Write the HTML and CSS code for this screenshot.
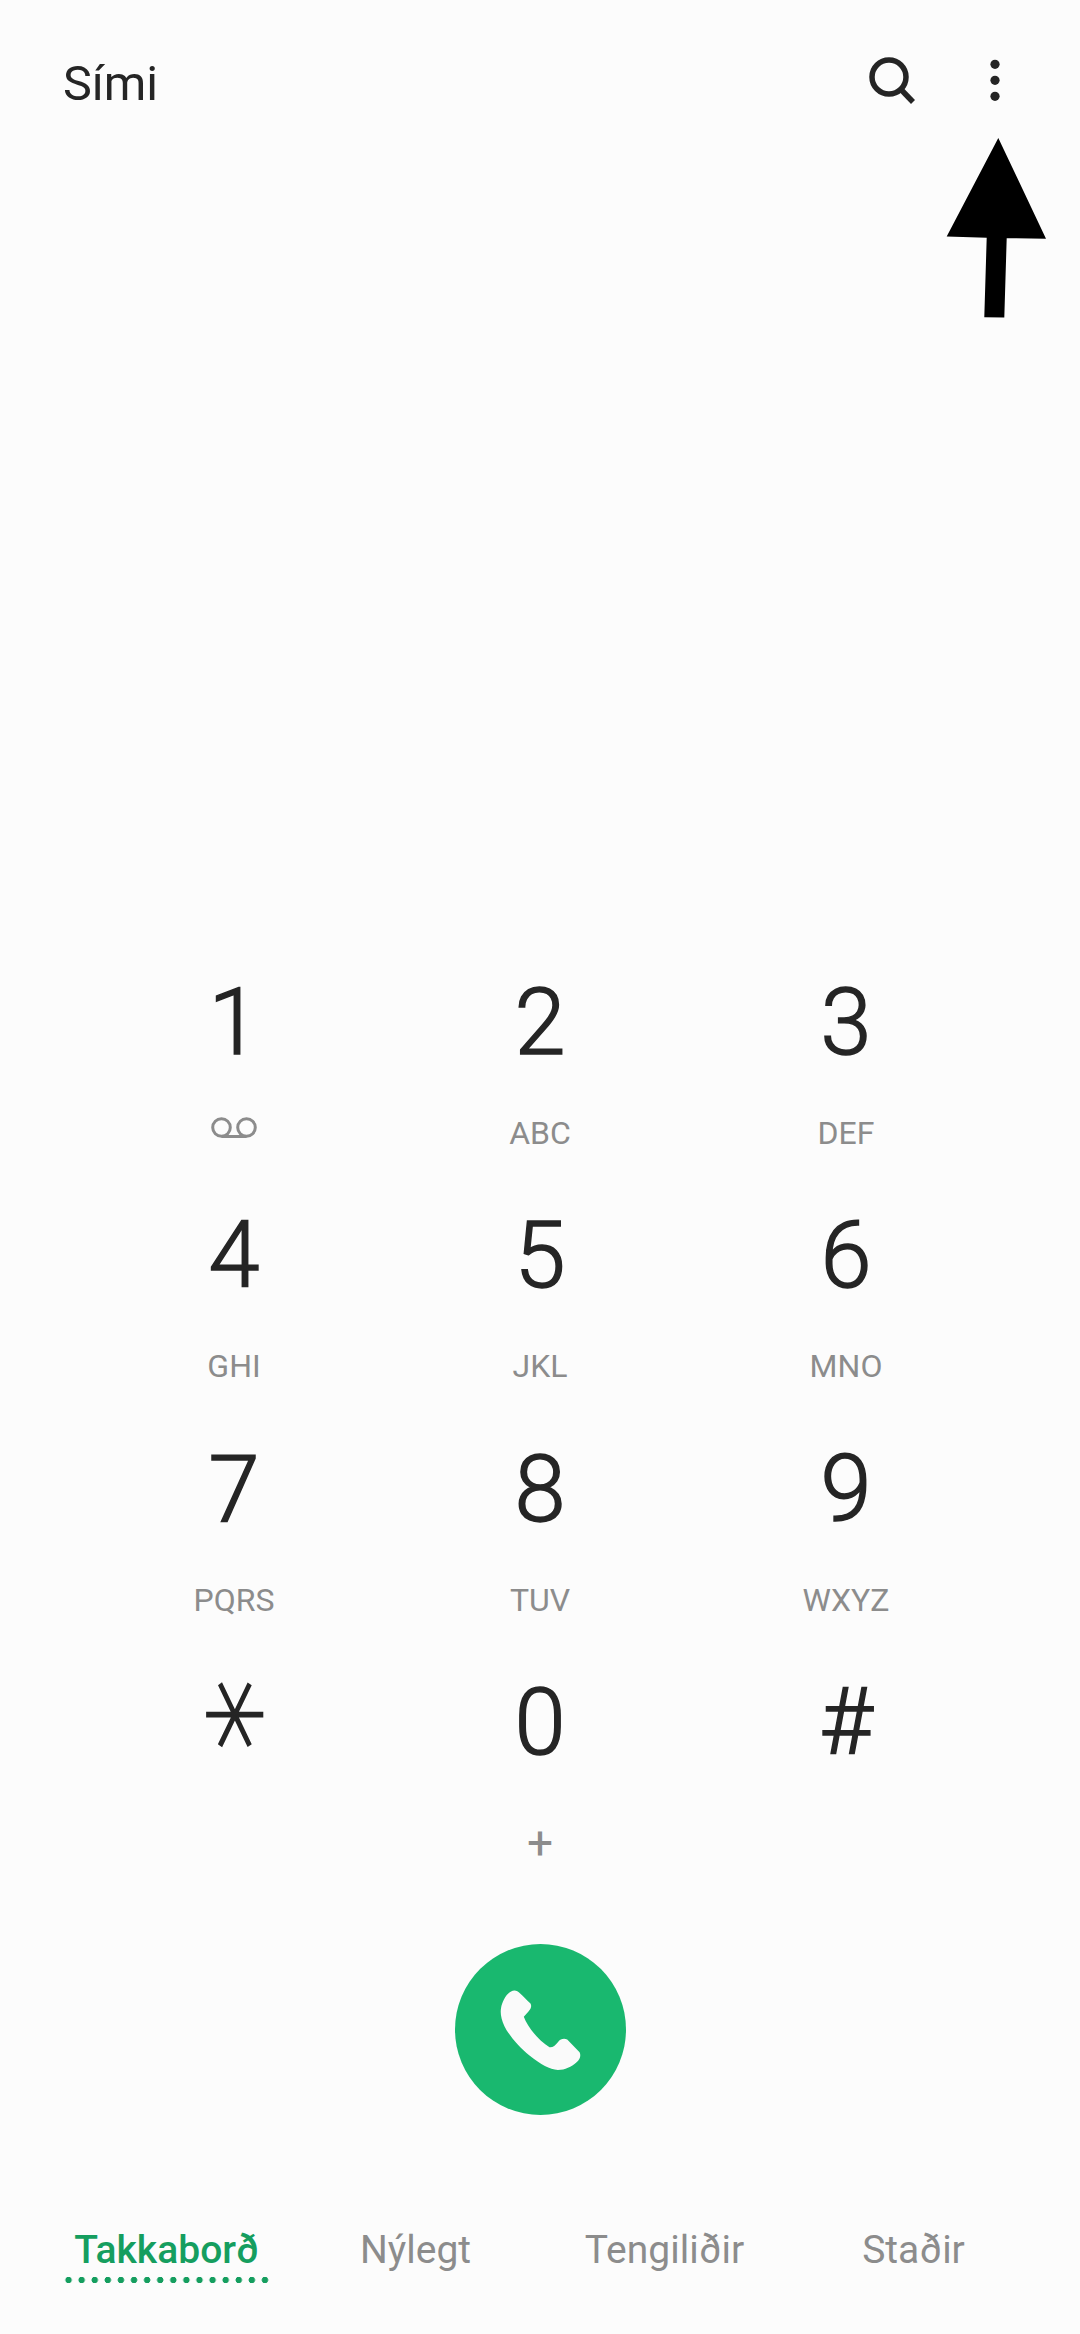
FILE: index.html
```html
<!DOCTYPE html>
<html lang="is">
<head>
    <meta charset="UTF-8">
    <meta name="viewport" content="width=device-width, initial-scale=1.0">
    <title>Sími</title>
    <link rel="stylesheet" href="styles.css">
</head>
<body>
    <header class="top-bar">
        <h1 class="app-title">Sími</h1>
        <div class="actions">
            <svg class="action-icon" viewBox="0 0 60 60" aria-label="Leita">
                <circle cx="29" cy="27" r="17" fill="none" stroke="#252525" stroke-width="5.5"/>
                <line x1="41" y1="39.5" x2="53" y2="52" stroke="#252525" stroke-width="5.5"/>
            </svg>
            <svg class="action-icon" viewBox="0 0 60 60" aria-label="Meira">
                <circle cx="30" cy="14.3" r="4.6" fill="#252525"/>
                <circle cx="30" cy="30.3" r="4.6" fill="#252525"/>
                <circle cx="30" cy="46.3" r="4.6" fill="#252525"/>
            </svg>
        </div>
    </header>

    <!-- black arrow pasted over the screenshot -->
    <svg class="arrow" viewBox="0 0 102 182">
        <polygon points="52.3,0 100,100.7 60.7,100.2 58.3,179.5 38.3,179.3 40.7,99.7 0.7,98.4"/>
    </svg>

    <main class="dialpad">
        <button class="key">
            <span class="digit">1</span>
            <svg class="voicemail" viewBox="0 0 46 21">
                <circle cx="10.5" cy="10.5" r="8.8" fill="none" stroke="#8c8c8c" stroke-width="3"/>
                <circle cx="35.5" cy="10.5" r="8.8" fill="none" stroke="#8c8c8c" stroke-width="3"/>
                <line x1="10.5" y1="19.5" x2="35.5" y2="19.5" stroke="#8c8c8c" stroke-width="3"/>
            </svg>
        </button>
        <button class="key"><span class="digit">2</span><span class="letters">ABC</span></button>
        <button class="key"><span class="digit">3</span><span class="letters">DEF</span></button>
        <button class="key"><span class="digit">4</span><span class="letters">GHI</span></button>
        <button class="key"><span class="digit">5</span><span class="letters">JKL</span></button>
        <button class="key"><span class="digit">6</span><span class="letters">MNO</span></button>
        <button class="key"><span class="digit">7</span><span class="letters">PQRS</span></button>
        <button class="key"><span class="digit">8</span><span class="letters">TUV</span></button>
        <button class="key"><span class="digit">9</span><span class="letters">WXYZ</span></button>
        <button class="key"><span class="digit star">∗</span></button>
        <button class="key"><span class="digit">0</span><span class="letters plus">+</span></button>
        <button class="key"><span class="digit">#</span></button>
    </main>

    <button class="call-button" aria-label="Hringja">
        <svg class="call-icon" viewBox="72 74 512 512">
            <path d="M250 213 C262 213 270 225 298 252 C302 260 300 268 292 276 L278 292 C290 325 325 365 355 383 C365 384 372 378 380 368 C388 358 398 356 408 360 L445 398 C450 408 446 420 436 428 C420 442 402 451 380 451 C355 450 330 435 295 408 C265 384 235 350 220 320 C210 298 207 280 210 265 C213 245 230 213 250 213 Z" fill="#fafafa"/>
        </svg>
    </button>

    <nav class="tabs">
        <a class="tab active">Takkaborð</a>
        <a class="tab">Nýlegt</a>
        <a class="tab">Tengiliðir</a>
        <a class="tab">Staðir</a>
    </nav>
</body>
</html>
```

FILE: styles.css
```css
body {
    margin: 0;
    height: 2334px;
    display: flex;
    flex-direction: column;
    position: relative;
    overflow: hidden;
    background-color: #fcfcfc;
    font-family: Roboto, "Liberation Sans", sans-serif;
    color: #252525;
}

.top-bar {
    display: flex;
    padding: 39px 55px 0 63px;
}

.app-title {
    margin: 0;
    font-size: 48.5px;
    font-weight: 400;
    line-height: 90px;
}

.actions {
    display: flex;
    gap: 45px;
    margin-left: auto;
    margin-top: 11px;
}

.action-icon {
    width: 60px;
    height: 60px;
}

.arrow {
    position: absolute;
    left: 946px;
    top: 138px;
    width: 102px;
    height: 182px;
}

.dialpad {
    display: grid;
    grid-template-columns: repeat(3, 306px);
    grid-auto-rows: 233.6px;
    justify-content: center;
    margin-top: auto;
}

.key {
    display: flex;
    flex-direction: column;
    align-items: center;
    padding: 0;
    border: none;
    background: none;
    font-family: inherit;
    color: inherit;
}

.digit {
    font-size: 92px;
    font-weight: 300;
    line-height: 100px;
    -webkit-text-stroke: 1.5px #252525;
}

.star {
    font-family: "DejaVu Sans", sans-serif;
    font-size: 121px;
    font-weight: 200;
    -webkit-text-stroke: 2px #252525;
    transform: translate(4px, -8px) scale(1, 1.2) rotate(90deg);
}

.letters {
    margin-top: 40px;
    font-size: 32px;
    line-height: 40px;
    -webkit-text-stroke: 0;
    color: #8c8c8c;
}

.plus {
    padding-top: 10px;
    font-size: 46px;
}

.voicemail {
    width: 46px;
    height: 21px;
    margin-top: 44px;
}

.call-button {
    align-self: center;
    width: 171px;
    height: 171px;
    margin-top: 37px;
    padding: 0;
    border: none;
    border-radius: 50%;
    background-color: #19b86f;
}

.call-icon {
    display: block;
    width: 171px;
    height: 171px;
}

.tabs {
    display: grid;
    grid-template-columns: repeat(4, 249px);
    padding: 0 42px 59px;
    margin-top: 110px;
}

.tab {
    font-size: 39px;
    line-height: 50px;
    text-align: center;
    color: #8c8c8c;
}

.active {
    width: 210px;
    justify-self: center;
    padding-bottom: 9px;
    margin-bottom: -9px;
    color: #159e5f;
    font-weight: 500;
    background: radial-gradient(circle, #159e5f 3px, transparent 3.5px) left bottom / 13.1px 8px repeat-x;
}
```
